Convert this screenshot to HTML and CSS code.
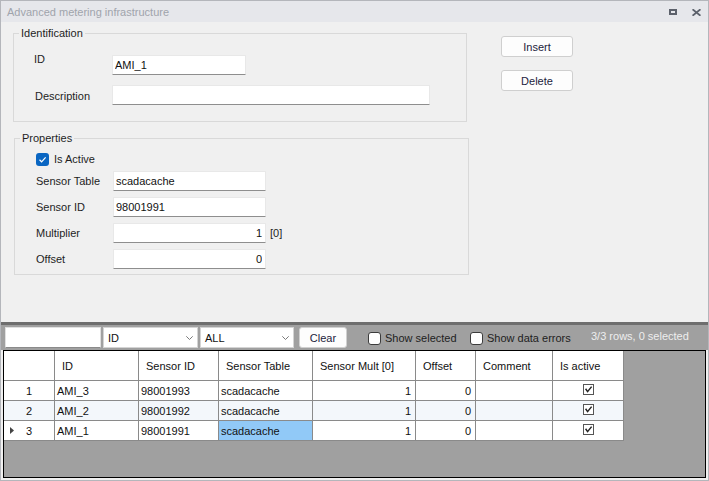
FILE: index.html
```html
<html>
<head>
    <link rel="stylesheet" href="styles.css">
</head>
<body>
<div class="window">
    <div class="titlebar">
        <span class="title">Advanced metering infrastructure</span>
        <div class="title-buttons">
            <svg class="icon-max" width="8" height="6" viewBox="0 0 8 6"><rect x="1" y="1" width="6" height="4" fill="none" stroke="#5c616b" stroke-width="2"/></svg>
            <svg class="icon-close" width="9" height="7" viewBox="0 0 9 7"><path d="M0.5 0.3 L8.5 6.7 M8.5 0.3 L0.5 6.7" stroke="#5c616b" stroke-width="1.9"/></svg>
        </div>
    </div>

    <div class="editor">
        <div class="groups">
            <fieldset class="group group-ident">
                <legend>Identification</legend>
                <div class="ident-grid">
                    <span class="lbl lbl-top">ID</span>
                    <input class="field field-id" value="AMI_1" readonly>
                    <span class="lbl lbl-desc">Description</span>
                    <input class="field field-desc" value="" readonly>
                </div>
            </fieldset>

            <fieldset class="group group-props">
                <legend>Properties</legend>
                <div class="check-row">
                    <span class="check-on">
                        <svg width="13" height="13" viewBox="0 0 13 13"><path d="M3.5 6.8 L5.6 8.8 L9.6 4.4" fill="none" stroke="#fff" stroke-width="1.2"/></svg>
                    </span>
                    <span>Is Active</span>
                </div>
                <div class="prop-grid">
                    <span class="lbl">Sensor Table</span>
                    <input class="field" value="scadacache" readonly>
                    <span></span>

                    <span class="lbl">Sensor ID</span>
                    <input class="field" value="98001991" readonly>
                    <span></span>

                    <span class="lbl">Multiplier</span>
                    <input class="field num" value="1" readonly>
                    <span class="unit">[0]</span>

                    <span class="lbl">Offset</span>
                    <input class="field num" value="0" readonly>
                    <span></span>
                </div>
            </fieldset>
        </div>

        <div class="actions">
            <button class="btn">Insert</button>
            <button class="btn">Delete</button>
        </div>
    </div>

    <div class="splitter"></div>

    <div class="lower">
        <div class="toolbar">
            <input class="filter" value="" readonly>
            <div class="combo combo-col">
                <span>ID</span>
                <svg width="7" height="4" viewBox="0 0 7 4"><path d="M0.3 0.3 L3.5 3.5 L6.7 0.3" fill="none" stroke="#6b6b6b" stroke-width="0.9"/></svg>
            </div>
            <div class="combo combo-all">
                <span>ALL</span>
                <svg width="7" height="4" viewBox="0 0 7 4"><path d="M0.3 0.3 L3.5 3.5 L6.7 0.3" fill="none" stroke="#6b6b6b" stroke-width="0.9"/></svg>
            </div>
            <button class="clear-btn">Clear</button>
            <label class="opt opt-sel"><span class="box"></span>Show selected</label>
            <label class="opt opt-err"><span class="box"></span>Show data errors</label>
            <span class="status">3/3 rows, 0 selected</span>
        </div>

        <div class="grid">
            <table class="data">
                <colgroup>
                    <col class="c-rh"><col class="c-id"><col class="c-sid"><col class="c-tab">
                    <col class="c-mult"><col class="c-off"><col class="c-com"><col class="c-act">
                </colgroup>
                <thead>
                <tr>
                    <th></th>
                    <th>ID</th>
                    <th>Sensor ID</th>
                    <th>Sensor Table</th>
                    <th>Sensor Mult [0]</th>
                    <th>Offset</th>
                    <th>Comment</th>
                    <th>Is active</th>
                </tr>
                </thead>
                <tbody>
                <tr>
                    <td class="rh"><div class="rh-in"><span></span><span></span><span class="rn">1</span></div></td>
                    <td>AMI_3</td>
                    <td>98001993</td>
                    <td>scadacache</td>
                    <td class="num">1</td>
                    <td class="num">0</td>
                    <td></td>
                    <td class="chk"><svg width="11" height="11" viewBox="0 0 11 11"><rect x="0.5" y="0.5" width="10" height="10" fill="#fff" stroke="#555"/><path d="M2.6 4.8 L4.6 7.6 L8.6 2.6" fill="none" stroke="#222" stroke-width="1.5"/></svg></td>
                </tr>
                <tr class="alt">
                    <td class="rh"><div class="rh-in"><span></span><span></span><span class="rn">2</span></div></td>
                    <td>AMI_2</td>
                    <td>98001992</td>
                    <td>scadacache</td>
                    <td class="num">1</td>
                    <td class="num">0</td>
                    <td></td>
                    <td class="chk"><svg width="11" height="11" viewBox="0 0 11 11"><rect x="0.5" y="0.5" width="10" height="10" fill="#fff" stroke="#555"/><path d="M2.6 4.8 L4.6 7.6 L8.6 2.6" fill="none" stroke="#222" stroke-width="1.5"/></svg></td>
                </tr>
                <tr>
                    <td class="rh"><div class="rh-in"><span></span><svg width="4" height="7" viewBox="0 0 4 7"><path d="M0 0 L4 3.5 L0 7 Z" fill="#444"/></svg><span class="rn">3</span></div></td>
                    <td>AMI_1</td>
                    <td>98001991</td>
                    <td class="sel">scadacache</td>
                    <td class="num">1</td>
                    <td class="num">0</td>
                    <td></td>
                    <td class="chk"><svg width="11" height="11" viewBox="0 0 11 11"><rect x="0.5" y="0.5" width="10" height="10" fill="#fff" stroke="#555"/><path d="M2.6 4.8 L4.6 7.6 L8.6 2.6" fill="none" stroke="#222" stroke-width="1.5"/></svg></td>
                </tr>
                </tbody>
            </table>
        </div>
    </div>
</div>
</body>
</html>
```

FILE: styles.css
```css
* {
    box-sizing: border-box;
}

body {
    margin: 0;
    font-family: "Liberation Sans", Arial, sans-serif;
    font-size: 11px;
    color: #1e1e1e;
}

.window {
    width: 709px;
    height: 481px;
    border: 1px solid #b4b6bb;
    background: #f0f0f0;
    display: flex;
    flex-direction: column;
}

/* title bar */
.titlebar {
    height: 21px;
    flex: none;
    display: flex;
    align-items: center;
    padding: 1px 7px 0 6px;
    background: #e6e7eb;
    color: #a0a4ac;
    line-height: 14px;
}

.title {
    flex: 1;
}

.title-buttons {
    display: flex;
    align-items: center;
    gap: 15px;
}

/* top editor */
.editor {
    height: 300px;
    flex: none;
    display: flex;
}

.groups {
    width: 470px;
    flex: none;
}

.group {
    margin: 0;
    padding: 0;
    border: 1px solid #d9d9d9;
    min-width: 0;
}

.group legend {
    margin-left: 5px;
    padding: 0 2px;
    line-height: 14px;
    color: #1e1e1e;
}

.group-ident {
    margin: 4px 0 0 12px;
    width: 454px;
    height: 96px;
    padding-top: 15px;
}

.group-props {
    margin: 9px 0 0 13px;
    width: 455px;
    height: 144px;
    padding-top: 7px;
}

.lbl {
    line-height: 14px;
}

.ident-grid {
    display: grid;
    grid-template-columns: 78px auto;
    row-gap: 10px;
    margin-left: 20px;
    align-items: center;
}

.lbl-top {
    align-self: start;
    margin-top: -3px;
}

.lbl-desc {
    margin: 1px 0 0 1px;
}

.field {
    height: 20px;
    border: 1px solid #e8e8e8;
    border-bottom-color: #8e8e8e;
    border-radius: 1px;
    background: #fff;
    padding: 0 3px 0 2px;
    font-family: "Liberation Sans", Arial, sans-serif;
    font-size: 11px;
    color: #111;
    outline: none;
}

.field-id {
    width: 134px;
}

.field-desc {
    width: 318px;
}

.field.num {
    text-align: right;
}

.check-row {
    display: flex;
    align-items: center;
    gap: 5px;
    margin-left: 21px;
    height: 14px;
    line-height: 14px;
}

.check-on {
    width: 13px;
    height: 13px;
    border-radius: 3px;
    background: #0a66c2;
    display: flex;
}

.prop-grid {
    display: grid;
    grid-template-columns: 77px 153px auto;
    row-gap: 6px;
    margin: 5px 0 0 21px;
    align-items: center;
}

.unit {
    margin-left: 4px;
}

.actions {
    margin-left: 30px;
    padding-top: 14px;
    display: flex;
    flex-direction: column;
    gap: 13px;
}

.btn {
    width: 72px;
    height: 21px;
    border: 1px solid #cfcfcf;
    border-radius: 3px;
    background: #fdfdfd;
    font-family: "Liberation Sans", Arial, sans-serif;
    font-size: 11px;
    color: #1c1c3c;
    padding: 0;
}

/* lower pane */
.splitter {
    height: 3px;
    flex: none;
    background: #6e6e6e;
}

.lower {
    flex: 1;
    display: flex;
    flex-direction: column;
}

.toolbar {
    height: 25px;
    flex: none;
    display: flex;
    align-items: center;
    padding-left: 4px;
    background: #a0a0a0;
    line-height: 14px;
}

.filter {
    width: 96px;
    height: 21px;
    border: 1px solid #e0e0e0;
    border-bottom-color: #8a8a8a;
    background: #fff;
    outline: none;
}

.combo {
    height: 21px;
    display: flex;
    align-items: center;
    justify-content: space-between;
    padding: 0 4px 0 4px;
    background: #fff;
    border: 1px solid #d4d4d4;
    color: #111;
}

.combo-col {
    width: 95px;
    margin-left: 2px;
}

.combo-all {
    width: 94px;
    margin-left: 2px;
}

.clear-btn {
    width: 48px;
    height: 21px;
    margin-left: 5px;
    padding: 0;
    border: 1px solid #d0d0d0;
    border-radius: 3px;
    background: #fdfdfd;
    font-family: "Liberation Sans", Arial, sans-serif;
    font-size: 11px;
    color: #1c1c3c;
}

.opt {
    display: flex;
    align-items: center;
    gap: 4px;
    color: #1e1e1e;
    padding-top: 1px;
}

.opt-sel {
    margin-left: 21px;
    width: 102px;
}

.opt-err {
    width: 121px;
}

.box {
    width: 13px;
    height: 13px;
    border: 1px solid #3c3c3c;
    border-radius: 3px;
    background: #fff;
}

.status {
    color: #eeeeee;
    margin-bottom: 4px;
}

/* data grid */
.grid {
    height: 128px;
    flex: none;
    margin: 0 2px 2px 2px;
    border: 1px solid #000;
    background: #a0a0a0;
}

.data {
    table-layout: fixed;
    width: 620px;
    border-spacing: 0;
    font-size: 11px;
}

.c-rh { width: 51px; }
.c-id { width: 84px; }
.c-sid { width: 80px; }
.c-tab { width: 94px; }
.c-mult { width: 103px; }
.c-off { width: 60px; }
.c-com { width: 77px; }
.c-act { width: 71px; }

.data th,
.data td {
    border-right: 1px solid #8a8a8a;
    border-bottom: 1px solid #8a8a8a;
    background: #fff;
    white-space: nowrap;
    overflow: hidden;
}

.data th {
    height: 30px;
    padding: 0 0 0 7px;
    font-weight: normal;
    text-align: left;
    color: #111;
}

.data td {
    height: 20px;
    padding: 0 4px 0 2px;
    color: #111;
}

.data tr.alt td {
    background: #f3f7fb;
}

.data td.num {
    text-align: right;
}

.data td.sel {
    background: #91c9f7;
}

.data td.rh {
    padding: 0;
}

.rh-in {
    display: grid;
    grid-template-columns: 6px 4px 30px;
    align-items: center;
}

.rn {
    text-align: center;
}

.data td.chk {
    text-align: center;
    padding: 0;
    line-height: 0;
}

.chk svg {
    margin-top: -3px;
}
```
